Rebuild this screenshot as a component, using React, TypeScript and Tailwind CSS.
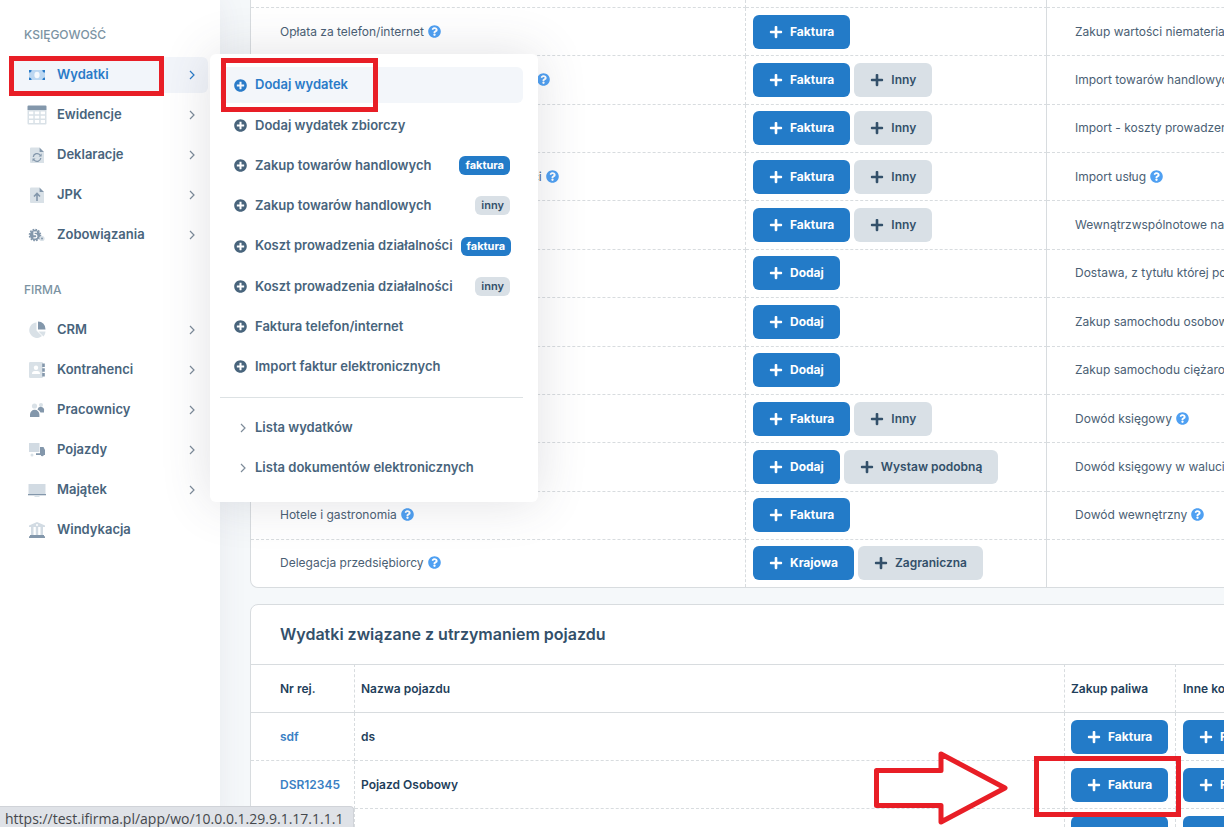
import type { ReactNode } from "react";
import { FaPlus, FaPlusCircle, FaQuestionCircle } from "react-icons/fa";

type MenuItem = { label: string; icon: ReactNode; active?: boolean; leaf?: boolean };
type Action = { label: string; light?: boolean };
type ExpenseRow = { name: string; help?: boolean; actions: Action[]; other?: string; otherHelp?: boolean };

const Glyph = ({ children }: { children: ReactNode }) => (
    <svg viewBox="0 0 20 20" className="h-5 w-5 shrink-0" aria-hidden="true">
        {children}
    </svg>
);

const accountingMenu: MenuItem[] = [
    {
        label: "Wydatki",
        active: true,
        icon: (
            <Glyph>
                <path fill="#bcd7f1" d="M2 5h16v10H2z" />
                <ellipse cx="10" cy="10" rx="2.6" ry="3.2" fill="#f5f9fd" />
                <path
                    fill="#2a7bc8"
                    d="M2 5h2.600A2.600 2.600 0 0 1 2 7.600zM18 5v2.600A2.600 2.600 0 0 1 15.400 5zM2 15v-2.600A2.600 2.600 0 0 1 4.600 15zM18 15h-2.600a2.600 2.600 0 0 1 2.600-2.600z"
                />
            </Glyph>
        ),
    },
    {
        label: "Ewidencje",
        icon: (
            <Glyph>
                <path fill="#d9e1e7" d="M.5 5h19v13.500a1 1 0 0 1-1 1h-17a1 1 0 0 1-1-1z" />
                <path
                    fill="#fff"
                    d="M2 6.500h4.300v2.800H2zM7.800 6.500h4.400v2.800H7.800zM13.700 6.500H18v2.800h-4.300zM2 10.800h4.300v2.800H2zM7.800 10.800h4.400v2.800H7.800zM13.700 10.800H18v2.800h-4.300zM2 15.100h4.300v2.800H2zM7.800 15.100h4.400v2.800H7.800zM13.700 15.100H18v2.800h-4.300z"
                />
                <path fill="#8397ab" d="M1.500.500h17a1 1 0 0 1 1 1V5H.5V1.500a1 1 0 0 1 1-1z" />
            </Glyph>
        ),
    },
    {
        label: "Deklaracje",
        icon: (
            <Glyph>
                <path fill="#d9e1e7" d="M4 2.500h8.500v4.500h4.500v11H4a1 1 0 0 1-1-1v-13.500a1 1 0 0 1 1-1z" />
                <path fill="#8397ab" d="M12.500 2.500L17 7h-4.500z" />
                <path fill="none" stroke="#8397ab" strokeWidth="1.300" d="M6.300 12a3.800 3.800 0 0 1 6.800-1.900M13.800 13a3.800 3.800 0 0 1-6.800 1.900" />
                <path fill="#8397ab" d="M14.600 8.500v3h-3zM5.500 16.500v-3h3z" />
            </Glyph>
        ),
    },
    {
        label: "JPK",
        icon: (
            <Glyph>
                <path fill="#d9e1e7" d="M4 2.500h8.500v4.500h4.500v11H4a1 1 0 0 1-1-1v-13.500a1 1 0 0 1 1-1z" />
                <path fill="#8397ab" d="M12.500 2.500L17 7h-4.500z" />
                <path fill="none" stroke="#8397ab" strokeWidth="1.600" d="M10 16V9M7 11.500l3-3 3 3" />
            </Glyph>
        ),
    },
    {
        label: "Zobowiązania",
        icon: (
            <Glyph>
                <circle cx="8" cy="10" r="5.200" fill="#8397ab" />
                <circle cx="8" cy="10" r="5.600" fill="none" stroke="#8397ab" strokeWidth="1.400" strokeDasharray="1.700 1.200" />
                <path fill="none" stroke="#fff" strokeWidth="1.200" d="M10 7.200H7v2.400h1.300a1.600 1.600 0 0 1 0 3.200H6.400" />
                <circle cx="15" cy="13.500" r="2.600" fill="#d9e1e7" />
                <circle cx="15" cy="13.500" r="1" fill="#8397ab" />
            </Glyph>
        ),
    },
];

const companyMenu: MenuItem[] = [
    {
        label: "CRM",
        icon: (
            <Glyph>
                <path fill="#d9e1e7" d="M9.500 2.500v8l5.500 5.500A7.700 7.700 0 1 1 9.500 2.500zM11.500 11.500h7a7 7 0 0 1-2 5z" />
                <path fill="#8397ab" d="M11 1.500a7.500 7.500 0 0 1 7.500 8H11z" />
            </Glyph>
        ),
    },
    {
        label: "Kontrahenci",
        icon: (
            <Glyph>
                <rect x="2" y="2" width="14" height="16" rx="1.200" fill="#d9e1e7" />
                <circle cx="9" cy="7.800" r="2.200" fill="#fff" />
                <path fill="#fff" d="M5 14a2.800 2.800 0 0 1 2.800-2.900h2.400A2.800 2.800 0 0 1 13 14z" />
                <path fill="#8397ab" d="M15.200 3.500h2.600v3.500h-2.600zM15.200 8.300h2.600v3.500h-2.600zM15.200 13.100h2.600v3.500h-2.600z" />
            </Glyph>
        ),
    },
    {
        label: "Pracownicy",
        icon: (
            <Glyph>
                <circle cx="7.500" cy="6" r="2.600" fill="#d9e1e7" />
                <circle cx="14" cy="5" r="2" fill="#d9e1e7" />
                <path fill="#8397ab" d="M3 17v-2.500a4.700 4.700 0 0 1 9.400 0V17zM10.500 9.500a3.200 3.200 0 0 1 6.500 1.500v1.500h-3.500a5.500 5.500 0 0 0-3-3z" />
            </Glyph>
        ),
    },
    {
        label: "Pojazdy",
        icon: (
            <Glyph>
                <path fill="#d2dbe3" d="M2 3h10.500v9H2z" />
                <circle cx="5" cy="15" r="1.500" fill="#d9e1e7" />
                <path fill="#8397ab" d="M13 7h3.500L18 10v5h-1.200a1.600 1.600 0 0 1-3.100 0H9v-1.800h4z" />
            </Glyph>
        ),
    },
    {
        label: "Majątek",
        icon: (
            <Glyph>
                <path fill="#d2dbe3" d="M1.500 4h17v10h-17z" />
                <path fill="#8397ab" d="M1 14h18v1.300H1z" />
                <path fill="#d9e1e7" d="M7.500 15.300h5v1.700h-5z" />
            </Glyph>
        ),
    },
    {
        label: "Windykacja",
        leaf: true,
        icon: (
            <Glyph>
                <path fill="#d2dbe3" d="M10 2l8 3.500V7H2V5.500zM4 7h2.500v8H4zM8.800 7h2.400v8H8.800zM13.500 7H16v8h-2.500z" />
                <circle cx="10" cy="5" r="1" fill="#fff" />
                <path fill="#8397ab" d="M3 15h14v1.300h1V18H2v-1.700h1z" />
            </Glyph>
        ),
    },
];

const submenu: { label: string; badge?: "faktura" | "inny"; active?: boolean }[] = [
    { label: "Dodaj wydatek", active: true },
    { label: "Dodaj wydatek zbiorczy" },
    { label: "Zakup towarów handlowych", badge: "faktura" },
    { label: "Zakup towarów handlowych", badge: "inny" },
    { label: "Koszt prowadzenia działalności", badge: "faktura" },
    { label: "Koszt prowadzenia działalności", badge: "inny" },
    { label: "Faktura telefon/internet" },
    { label: "Import faktur elektronicznych" },
];

const invoice: Action = { label: "Faktura" };
const different: Action = { label: "Inny", light: true };
const add: Action = { label: "Dodaj" };

const expenses: ExpenseRow[] = [
    { name: "Opłata za telefon/internet", help: true, actions: [invoice], other: "Zakup wartości niematerialnych i prawnych" },
    { name: "Zakup towarów handlowych oraz materiałów", help: true, actions: [invoice, different], other: "Import towarów handlowych" },
    { name: "Uboczne koszty zakupu", actions: [invoice, different], other: "Import - koszty prowadzenia działalności" },
    { name: "Inne koszty prowadzenia bieżącej działalności", help: true, actions: [invoice, different], other: "Import usług", otherHelp: true },
    { name: "Zakup paliwa", actions: [invoice, different], other: "Wewnątrzwspólnotowe nabycie towarów" },
    { name: "Wynagrodzenia", actions: [add], other: "Dostawa, z tytułu której podatnikiem jest nabywca" },
    { name: "Składki ZUS", actions: [add], other: "Zakup samochodu osobowego" },
    { name: "Opłaty bankowe", actions: [add], other: "Zakup samochodu ciężarowego" },
    { name: "Środki trwałe", actions: [invoice, different], other: "Dowód księgowy", otherHelp: true },
    { name: "Rachunki", actions: [add, { label: "Wystaw podobną", light: true }], other: "Dowód księgowy w walucie" },
    { name: "Hotele i gastronomia", help: true, actions: [invoice], other: "Dowód wewnętrzny", otherHelp: true },
    { name: "Delegacja przedsiębiorcy", help: true, actions: [{ label: "Krajowa" }, { label: "Zagraniczna", light: true }] },
];

const vehicles = [
    { plate: "sdf", name: "ds" },
    { plate: "DSR12345", name: "Pojazd Osobowy" },
    { plate: "DW54321", name: "Pojazd Ciężarowy" },
];

const Chevron = () => (
    <svg viewBox="0 0 6 10" className="h-[10px] w-[6px] shrink-0" aria-hidden="true">
        <path d="M1 1l4 4-4 4" fill="none" stroke="currentColor" strokeWidth="1.200" />
    </svg>
);

const Help = () => (
    <button type="button" aria-label="Pomoc" className="ml-1 align-[-2px] text-[#4fa0f2]">
        <FaQuestionCircle size={13} />
    </button>
);

const ActionButton = ({ label, light }: Action) => (
    <button
        type="button"
        className={
            light
                ? "flex h-[34px] items-center gap-[7px] rounded-md bg-[#d9e0e6] px-4 text-[12px] font-semibold text-[#33506a]"
                : "flex h-[34px] items-center gap-[7px] rounded-md bg-[#237bc8] px-4 text-[12px] font-bold text-white"
        }
    >
        <FaPlus size={14} />
        {label}
    </button>
);

const MenuGroup = ({ title, items }: { title: string; items: MenuItem[] }) => (
    <section>
        <h2 className="mb-3 pl-6 text-[12px] leading-5 font-medium text-[#7b93a3]">{title}</h2>
        <ul className="flex flex-col gap-1 pr-3 pl-[10px]">
            {items.map((item) => (
                <li key={item.label}>
                    <a
                        href="#"
                        className={
                            item.active
                                ? "flex h-9 items-center gap-[10px] rounded-md bg-[#f2f5fa] pr-[13px] pl-[17px] text-[#2a7bc8]"
                                : "flex h-9 items-center gap-[10px] rounded-md pr-[13px] pl-[17px] text-[#48647c]"
                        }
                    >
                        {item.icon}
                        <span className="flex-1 text-[13px] font-semibold">{item.label}</span>
                        {!item.leaf && (
                            <span className={item.active ? "text-[#2a7bc8]" : "text-[#7d8b99]"}>
                                <Chevron />
                            </span>
                        )}
                    </a>
                </li>
            ))}
        </ul>
    </section>
);

const Flyout = () => (
    <div className="absolute top-[54px] left-[210px] z-10 w-[328px] rounded-md bg-white pt-[13px] pr-[15px] pb-4 pl-[10px] shadow-[0_0_50px_rgba(70,70,90,0.16)]">
        <ul className="flex h-[318px] flex-col justify-between">
            {submenu.map((item, i) => (
                <li key={i}>
                    <a
                        href="#"
                        className={
                            item.active
                                ? "flex h-9 items-center gap-2 rounded-md bg-[#f3f6fa] pr-[13px] pl-[14px] text-[#2a7bc8]"
                                : "flex h-9 items-center gap-2 rounded-md pr-[13px] pl-[14px] text-[#48647c]"
                        }
                    >
                        <FaPlusCircle size={13} className="shrink-0" />
                        <span className="flex-1 text-[13px] font-semibold whitespace-nowrap">{item.label}</span>
                        {item.badge === "faktura" && (
                            <span className="rounded-md bg-[#237bc8] px-[6px] text-[11px] leading-[19px] font-bold text-white">faktura</span>
                        )}
                        {item.badge === "inny" && (
                            <span className="rounded-md bg-[#d9e0e6] px-[6px] text-[11px] leading-[19px] font-semibold text-[#33506a]">inny</span>
                        )}
                    </a>
                </li>
            ))}
        </ul>
        <hr className="my-3 border-[#dde2e4]" />
        <ul className="flex flex-col gap-1">
            {["Lista wydatków", "Lista dokumentów elektronicznych"].map((label) => (
                <li key={label}>
                    <a href="#" className="flex h-9 items-center gap-[9px] pl-5 text-[#48647c]">
                        <span className="text-[#7d8b99]">
                            <Chevron />
                        </span>
                        <span className="text-[13px] font-semibold whitespace-nowrap">{label}</span>
                    </a>
                </li>
            ))}
        </ul>
    </div>
);

const ExpensesCard = () => (
    <div className="overflow-hidden rounded-b-lg border border-t-0 border-[#d8dcdf] bg-white">
        <table className="h-[587px] w-full table-fixed border-separate border-spacing-0 text-[12px] text-[#4a6074]">
            <colgroup>
                <col className="w-[495px]" />
                <col className="w-[301px]" />
                <col />
            </colgroup>
            <tbody>
                <tr className="h-2">
                    <td className="h-2 border-r border-b border-dashed border-[#d8dcdf] p-0" />
                    <td className="h-2 border-r border-b border-[#d8dcdf] p-0 [border-bottom-style:dashed]" />
                    <td className="h-2 border-b border-dashed border-[#d8dcdf] p-0" />
                </tr>
                {expenses.map((row, i) => (
                    <tr key={i} className="group whitespace-nowrap">
                        <td className="border-r border-b border-dashed border-[#d8dcdf] py-0 pl-[29px] group-last:border-b-0">
                            {row.name}
                            {row.help && <Help />}
                        </td>
                        <td className="border-r border-b border-[#d8dcdf] py-0 pl-[7px] [border-bottom-style:dashed] group-last:border-b-0">
                            <div className="flex gap-1">
                                {row.actions.map((action) => (
                                    <ActionButton key={action.label} {...action} />
                                ))}
                            </div>
                        </td>
                        <td className="border-b border-dashed border-[#d8dcdf] py-0 pl-7 group-last:border-b-0">
                            {row.other}
                            {row.otherHelp && <Help />}
                        </td>
                    </tr>
                ))}
            </tbody>
        </table>
    </div>
);

const VehiclesCard = () => (
    <div className="overflow-hidden rounded-lg border border-[#d8dcdf] bg-white">
        <h2 className="pl-[29px] text-[16px] leading-[59px] font-semibold text-[#33506a]">Wydatki związane z utrzymaniem pojazdu</h2>
        <table className="w-full table-fixed border-separate border-spacing-0 text-left text-[12px] text-[#1f3f5b]">
            <colgroup>
                <col className="w-[104px]" />
                <col className="w-[710px]" />
                <col className="w-[111px]" />
                <col />
            </colgroup>
            <thead>
                <tr className="h-[49px] whitespace-nowrap [&>th]:border-y [&>th]:border-r [&>th]:border-[#d8dcdf] [&>th]:py-0 [&>th]:font-semibold [&>th]:[border-right-style:dashed]">
                    <th className="pl-[29px]">Nr rej.</th>
                    <th className="pl-[6px]">Nazwa pojazdu</th>
                    <th className="pl-[6px]">Zakup paliwa</th>
                    <th className="pl-[7px]">Inne koszty</th>
                </tr>
            </thead>
            <tbody>
                {vehicles.map((v) => (
                    <tr key={v.plate} className="h-12 font-semibold [&>td]:border-r [&>td]:border-b [&>td]:border-dashed [&>td]:border-[#d8dcdf] [&>td]:py-0">
                        <td className="pl-[29px]">
                            <a href="#" className="text-[#3a7fc4]">
                                {v.plate}
                            </a>
                        </td>
                        <td className="pl-[6px]">{v.name}</td>
                        <td className="pl-[6px]">
                            <ActionButton label="Faktura" />
                        </td>
                        <td className="pl-[7px]">
                            <ActionButton label="Faktura" />
                        </td>
                    </tr>
                ))}
            </tbody>
        </table>
    </div>
);

// red frames and arrow that lead the reader through the steps
const Annotations = () => (
    <div className="pointer-events-none">
        <div className="absolute top-[56px] left-[9px] z-20 h-[40px] w-[155px] border-5 border-[#e81e26]" />
        <div className="absolute top-[58px] left-[221px] z-20 h-[54px] w-[157px] border-5 border-[#e81e26]" />
        <div className="absolute top-[756px] left-[1034px] z-20 h-[61px] w-[147px] border-5 border-[#e81e26]" />
        <svg viewBox="0 0 136 76" className="absolute top-[750px] left-[873px] z-20 h-[76px] w-[136px]" aria-hidden="true">
            <path
                d="M3.500 20.500H68V4l64 34-64 34V55.500H3.500z"
                fill="#fff"
                stroke="#e81e26"
                strokeWidth="5"
                strokeLinejoin="round"
            />
        </svg>
    </div>
);

export default function App() {
    return (
        <div className="relative flex h-screen overflow-hidden bg-[#f5f8fa] font-[Inter,'Noto_Sans',sans-serif]">
            <aside className="flex w-[220px] shrink-0 flex-col gap-[27px] bg-white pt-[25px] shadow-[0_0_28px_rgba(82,63,105,0.08)]">
                <MenuGroup title="KSIĘGOWOŚĆ" items={accountingMenu} />
                <MenuGroup title="FIRMA" items={companyMenu} />
            </aside>
            <main className="min-w-0 flex-1 overflow-hidden pl-[30px]">
                <div className="flex min-w-[1080px] flex-col gap-4">
                    <ExpensesCard />
                    <VehiclesCard />
                </div>
            </main>
            <Flyout />
            <Annotations />
            <div className="absolute bottom-0 left-0 z-20 h-[21px] w-[354px] rounded-tr border-t border-r border-[#d0d3d8] bg-[#dfe2e7] pl-[5px] font-['Open_Sans','Noto_Sans',sans-serif] text-[14px] leading-[24px] whitespace-nowrap text-[#45484c]">
                https://test.ifirma.pl/app/wo/10.0.0.1.29.9.1.17.1.1.1
            </div>
        </div>
    );
}
